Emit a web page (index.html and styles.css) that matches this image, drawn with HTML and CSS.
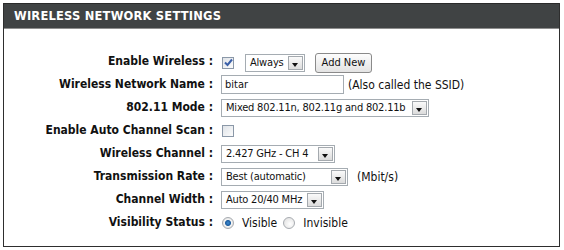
FILE: index.html
```html
<!DOCTYPE html>
<html>
<head>
  <title>Wireless Network Settings</title>
  <link rel="stylesheet" href="styles.css">
</head>
<body>
  <div class="panel">
    <h2 class="panel-title">WIRELESS NETWORK SETTINGS</h2>

    <div class="form">
      <label class="field-label">Enable Wireless :</label>
      <div class="field">
        <span class="check checked">
          <svg width="9" height="9" viewBox="0 0 9 9"><path d="M1 4.5 L3.5 7 L8 1.5" fill="none" stroke="#3a5fa8" stroke-width="2"/></svg>
        </span>
        <div class="select w-always"><span class="value">Always</span><span class="arrow"></span></div>
        <button class="btn">Add New</button>
      </div>

      <label class="field-label">Wireless Network Name :</label>
      <div class="field">
        <input class="text" type="text" value="bitar">
        <span class="hint">(Also called the SSID)</span>
      </div>

      <label class="field-label">802.11 Mode :</label>
      <div class="field">
        <div class="select w-mode"><span class="value">Mixed 802.11n, 802.11g and 802.11b</span><span class="arrow"></span></div>
      </div>

      <label class="field-label">Enable Auto Channel Scan :</label>
      <div class="field">
        <span class="check"></span>
      </div>

      <label class="field-label">Wireless Channel :</label>
      <div class="field">
        <div class="select w-channel"><span class="value">2.427 GHz - CH 4</span><span class="arrow"></span></div>
      </div>

      <label class="field-label">Transmission Rate :</label>
      <div class="field">
        <div class="select w-rate"><span class="value">Best (automatic)</span><span class="arrow"></span></div>
        <span class="hint unit">(Mbit/s)</span>
      </div>

      <label class="field-label">Channel Width :</label>
      <div class="field">
        <div class="select w-width"><span class="value">Auto 20/40 MHz</span><span class="arrow"></span></div>
      </div>

      <label class="field-label">Visibility Status :</label>
      <div class="field">
        <span class="radio selected"></span>
        <span class="radio-text">Visible</span>
        <span class="radio"></span>
        <span class="radio-text">Invisible</span>
      </div>
    </div>
  </div>
</body>
</html>
```

FILE: styles.css
```css
/* Pagina */
body {
  margin: 0;
  padding: 3px;
  background-color: #fff;
  font-family: "DejaVu Sans Condensed", "DejaVu Sans", sans-serif;
  color: #111;
}

/* Caja principal */
.panel {
  width: 555px;
  height: 243px;
  border: 1px solid #2e2e2e;
  border-top: none;
  box-sizing: content-box;
}

.panel-title {
  margin: 0;
  height: 24px;
  line-height: 25px;
  padding-left: 10px;
  background-color: #404344;
  border-top: 1px solid #2a2a2a;
  border-bottom: 1px solid #8e8e8e;
  color: #fff;
  font-family: "DejaVu Sans", sans-serif;
  font-size: 11.5px;
  font-weight: bold;
  letter-spacing: 0.2px;
}

/* Formulario */
.form {
  display: grid;
  grid-template-columns: 209px auto;
  column-gap: 8px;
  grid-auto-rows: 23px;
  padding-top: 21px;
}

.form > :first-child,
.form > :nth-child(2) {
  height: 25px;
}

.field-label {
  text-align: right;
  font-weight: bold;
  font-size: 12px;
  line-height: 23px;
}

.field {
  display: flex;
  align-items: center;
  font-size: 11px;
  letter-spacing: -0.2px;
}

.hint {
  margin-left: 4px;
  font-size: 12px;
  letter-spacing: 0;
}

.unit {
  margin-left: 9px;
}

/* Controles */
.text {
  width: 123px;
  height: 19px;
  box-sizing: border-box;
  border: 1px solid #a5acb2;
  padding: 0 3px;
  font-family: inherit;
  font-size: 11px;
  color: #111;
}

.select {
  display: flex;
  align-items: center;
  height: 18px;
  box-sizing: border-box;
  border: 1px solid #a5acb2;
  background-color: #fff;
}

.select .value {
  flex: 1;
  min-width: 0;
  overflow: hidden;
  padding-left: 4px;
  white-space: nowrap;
}

.select .arrow {
  position: relative;
  flex-shrink: 0;
  width: 15px;
  height: 14px;
  margin: 0 1px;
  border: 1px solid #a4a9ae;
  background: linear-gradient(#fafafa, #dcdcdc);
  box-sizing: border-box;
}

.select .arrow::after {
  content: "";
  position: absolute;
  left: 3px;
  top: 6px;
  border-left: 3.5px solid transparent;
  border-right: 3.5px solid transparent;
  border-top: 4px solid #111;
}

.w-always { width: 60px; margin-left: 11px; }
.w-mode { width: 208px; }
.w-channel { width: 114px; }
.w-rate { width: 127px; }
.w-width { width: 103px; }

.btn {
  margin-left: 10px;
  height: 20px;
  width: 57px;
  padding: 0;
  border: 1px solid #8a8a8a;
  border-radius: 3px;
  background: linear-gradient(#fdfdfd, #e3e3e3);
  font-family: inherit;
  font-size: 11px;
  color: #111;
}

.check {
  display: inline-flex;
  align-items: center;
  justify-content: center;
  width: 12px;
  height: 12px;
  margin-left: 1px;
  box-sizing: border-box;
  border: 1px solid #8b98a8;
  background: linear-gradient(135deg, #dfe3e8, #fcfcfc);
}

.radio {
  display: inline-block;
  width: 12px;
  height: 12px;
  box-sizing: border-box;
  border: 1px solid #a7abb0;
  border-radius: 50%;
  background: radial-gradient(circle at 60% 60%, #fff, #dcdcdc);
}

.radio.selected {
  margin-left: 1px;
  background: radial-gradient(circle, #3f8bd0 0, #1c5d9f 2.5px, #f4f4f4 3.5px, #dadada 6px);
}

.radio-text {
  margin-left: 8px;
  margin-right: 6px;
  font-size: 12px;
  letter-spacing: 0;
}
```
